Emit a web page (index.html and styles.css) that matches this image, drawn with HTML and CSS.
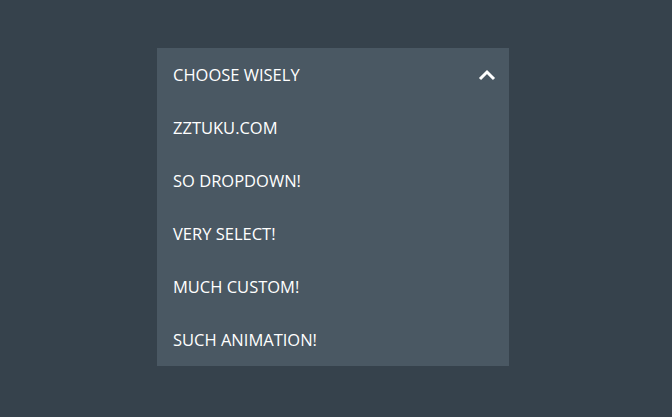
FILE: index.html
```html
<!DOCTYPE html>
<html lang="en">
<head>
    <meta charset="UTF-8">
    <meta name="viewport" content="width=device-width, initial-scale=1.0">
    <title>Custom Dropdown</title>
    <link rel="stylesheet" href="styles.css">
</head>
<body>

    <div class="dropdown">
        <div class="dropdown-head">
            <span>Choose wisely</span>
            <svg class="arrow" width="18" height="12" viewBox="0 0 18 12">
                <path d="M2 10 L9 3 L16 10" fill="none" stroke="#fff" stroke-width="3"/>
            </svg>
        </div>
        <ul class="options">
            <li>zztuku.com</li>
            <li>So dropdown!</li>
            <li>Very select!</li>
            <li>Much custom!</li>
            <li>Such animation!</li>
        </ul>
    </div>

</body>
</html>
```

FILE: styles.css
```css
body {
    margin: 0;
    height: 417px;
    background-color: #36424c;
    font-family: "Open Sans", sans-serif;
}

.dropdown {
    width: 352px;
    margin-left: 157px;
    position: relative;
    top: 48px;
    background-color: #4a5863;
    color: #fff;
    text-transform: uppercase;
    font-size: 16.5px;
}

.dropdown-head,
.options li {
    height: 53px;
    padding: 0 16px;
    display: flex;
    align-items: center;
    box-sizing: border-box;
}

.dropdown-head {
    justify-content: space-between;
    padding-right: 13px;
}

.options {
    list-style: none;
    margin: 0;
    padding: 0;
}
```
